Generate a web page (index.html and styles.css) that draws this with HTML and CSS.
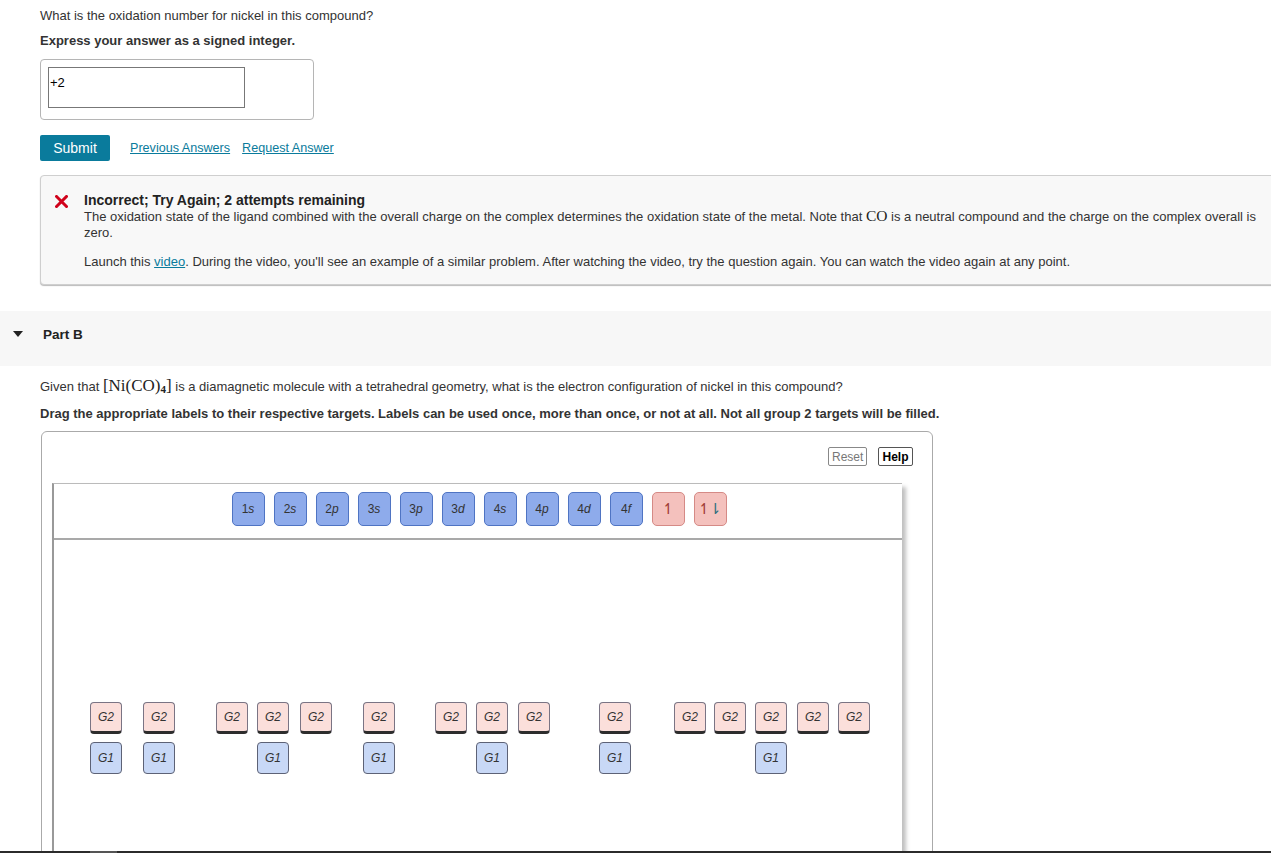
FILE: index.html
```html
<!DOCTYPE html>
<html>
<head>
<meta charset="utf-8">
<link rel="stylesheet" href="styles.css">
</head>
<body>
<div class="page">
  <section class="part-a">
    <p class="q">What is the oxidation number for nickel in this compound?</p>
    <p class="instr">Express your answer as a signed integer.</p>
    <div class="answer-box">
      <div class="answer-input">+2</div>
    </div>
    <div class="actions">
      <button class="submit">Submit</button>
      <a class="link" href="#">Previous Answers</a>
      <a class="link" href="#">Request Answer</a>
    </div>
    <div class="feedback">
      <svg class="xmark" width="13" height="13" viewBox="0 0 13 13"><path d="M1.5 1.5 L11.5 11.5 M11.5 1.5 L1.5 11.5" stroke="#d0021b" stroke-width="3" stroke-linecap="square"/></svg>
      <div class="fb-body">
        <div class="fb-title">Incorrect; Try Again; 2 attempts remaining</div>
        <p class="fb-text"><span class="nw">The oxidation state of the ligand combined with the overall charge on the complex determines the oxidation state of the metal. Note that <span class="math">CO</span> is a neutral compound and the charge on the complex overall is</span><br>zero.</p>
        <p class="fb-text fb-launch">Launch this <a class="vlink" href="#">video</a>. During the video, you'll see an example of a similar problem. After watching the video, try the question again. You can watch the video again at any point.</p>
      </div>
    </div>
  </section>

  <div class="part-header">
    <span class="tri"></span>
    <span class="part-title">Part B</span>
  </div>

  <section class="part-b">
    <p class="q2">Given that <span class="math big">[Ni(CO)<sub>4</sub>]</span> is a diamagnetic molecule with a tetrahedral geometry, what is the electron configuration of nickel in this compound?</p>
    <p class="instr2">Drag the appropriate labels to their respective targets. Labels can be used once, more than once, or not at all. Not all group 2 targets will be filled.</p>
    <div class="dnd">
      <div class="dnd-tools">
        <button class="tool reset">Reset</button>
        <button class="tool help">Help</button>
      </div>
      <div class="panel">
        <div class="bank">
          <div class="lbl">1<i>s</i></div>
          <div class="lbl">2<i>s</i></div>
          <div class="lbl">2<i>p</i></div>
          <div class="lbl">3<i>s</i></div>
          <div class="lbl">3<i>p</i></div>
          <div class="lbl">3<i>d</i></div>
          <div class="lbl">4<i>s</i></div>
          <div class="lbl">4<i>p</i></div>
          <div class="lbl">4<i>d</i></div>
          <div class="lbl">4<i>f</i></div>
          <div class="lbl spin"><span class="up">↿</span></div>
          <div class="lbl spin"><span class="up">↿</span><span class="dn">⇂</span></div>
        </div>
        <div class="canvas">
          <div class="tg g2" style="left:36px">G2</div>
          <div class="tg g2" style="left:89px">G2</div>
          <div class="tg g2" style="left:162px">G2</div>
          <div class="tg g2" style="left:203px">G2</div>
          <div class="tg g2" style="left:246px">G2</div>
          <div class="tg g2" style="left:309px">G2</div>
          <div class="tg g2" style="left:381px">G2</div>
          <div class="tg g2" style="left:422px">G2</div>
          <div class="tg g2" style="left:464px">G2</div>
          <div class="tg g2" style="left:545px">G2</div>
          <div class="tg g2" style="left:620px">G2</div>
          <div class="tg g2" style="left:660px">G2</div>
          <div class="tg g2" style="left:701px">G2</div>
          <div class="tg g2" style="left:743px">G2</div>
          <div class="tg g2" style="left:784px">G2</div>

          <div class="tg g1" style="left:36px">G1</div>
          <div class="tg g1" style="left:89px">G1</div>
          <div class="tg g1" style="left:203px">G1</div>
          <div class="tg g1" style="left:309px">G1</div>
          <div class="tg g1" style="left:422px">G1</div>
          <div class="tg g1" style="left:545px">G1</div>
          <div class="tg g1" style="left:701px">G1</div>
        </div>
      </div>
    </div>
  </section>
</div>
<div class="hscroll"><span class="thumb"></span></div>
</body>
</html>
```

FILE: styles.css
```css
html, body {
  margin: 0;
  padding: 0;
  background: #fff;
  overflow: hidden;
}
body {
  font-family: "Liberation Sans", Arial, sans-serif;
  font-size: 13px;
  color: #333;
  width: 1271px;
  height: 853px;
}
.page {
  width: 1271px;
}
.part-a {
  padding: 8px 0 0 40px;
}
.q {
  margin: 0;
  line-height: 16px;
}
.instr {
  margin: 9px 0 0 0;
  font-weight: bold;
  line-height: 16px;
}
.answer-box {
  margin-top: 10px;
  width: 258px;
  height: 45px;
  border: 1px solid #b5b5b5;
  border-radius: 4px;
  padding: 7px;
}
.answer-input {
  width: 194px;
  height: 39px;
  border: 1px solid #777;
  color: #000;
  font-size: 13px;
  padding: 0 0 0 1px;
  line-height: 30px;
  box-sizing: content-box;
}
.actions {
  display: flex;
  align-items: center;
  margin-top: 15px;
  height: 26px;
}
.submit {
  width: 70px;
  height: 26px;
  border: 0;
  border-radius: 2px;
  background: #0a7b9c;
  color: #fff;
  font-family: "Liberation Sans", Arial, sans-serif;
  font-size: 14px;
  padding: 0;
  margin-right: 20px;
}
.link {
  color: #0a7b9c;
  font-size: 12.6px;
  text-decoration: underline;
  margin-right: 12px;
}
.feedback {
  margin-top: 14px;
  width: 1250px;
  background: #f8f8f8;
  border: 1px solid #cfcfcf;
  border-radius: 4px;
  box-shadow: 0 1px 1px #bbb;
  display: flex;
  padding: 16px 0 14px 14px;
  box-sizing: border-box;
}
.xmark {
  flex: none;
  margin-top: 3px;
  margin-right: 16px;
}
.fb-body {
  width: 1180px;
}
.fb-title {
  font-weight: bold;
  font-size: 14px;
  color: #222;
  line-height: 17px;
}
.fb-text {
  margin: 0;
  font-size: 13px;
  line-height: 16px;
  color: #333;
}
.nw {
  white-space: nowrap;
}
.fb-launch {
  margin-top: 13px;
}
.math {
  font-family: "Liberation Serif", "Times New Roman", serif;
  font-size: 16px;
  color: #222;
  line-height: 0;
}
.fb-text .math {
  font-size: 15.5px;
}
.math.big {
  font-size: 17px;
}
.math sub {
  font-size: 11px;
  font-weight: bold;
  vertical-align: -2px;
  line-height: 0;
}
.vlink {
  color: #0a7b9c;
  text-decoration: underline;
}
.part-header {
  margin-top: 26px;
  height: 55px;
  padding-bottom: 9px;
  box-sizing: border-box;
  background: #f7f7f7;
  display: flex;
  align-items: center;
}
.tri {
  width: 0;
  height: 0;
  border-left: 5px solid transparent;
  border-right: 5px solid transparent;
  border-top: 6px solid #222;
  margin-left: 13px;
  margin-right: 20px;
}
.part-title {
  font-weight: bold;
  font-size: 13.5px;
  color: #222;
}
.part-b {
  padding: 11px 0 0 40px;
}
.q2 {
  margin: 0;
  line-height: 20px;
}
.instr2 {
  margin: 9px 0 0 0;
  font-weight: bold;
  line-height: 16px;
}
.dnd {
  margin-top: 9px;
  margin-left: 1px;
  width: 892px;
  height: 440px;
  border: 1px solid #aaa;
  border-radius: 6px;
  padding: 15px 0 0 10px;
  box-sizing: border-box;
}
.dnd-tools {
  display: flex;
  justify-content: flex-end;
  gap: 11px;
  padding-right: 19px;
  height: 20px;
}
.tool {
  height: 19px;
  padding: 0 3px;
  background: #fff;
  border: 1px solid #888;
  border-radius: 2px;
  font-family: "Liberation Sans", Arial, sans-serif;
  font-size: 12px;
  line-height: 16px;
}
.reset {
  color: #777;
  width: 39px;
}
.help {
  color: #000;
  border-color: #555;
  font-weight: bold;
  width: 35px;
}
.panel {
  margin-top: 16px;
  width: 850px;
  height: 400px;
  border-top: 1px solid #bbb;
  border-left: 2px solid #999;
  box-shadow: 4px 4px 4px rgba(0,0,0,0.25);
  box-sizing: border-box;
  background: #fff;
}
.bank {
  height: 56px;
  border-bottom: 2px solid #a9a9a9;
  display: flex;
  justify-content: center;
  gap: 9px;
  padding-top: 8px;
  box-sizing: border-box;
  padding-left: 2px;
}
.lbl {
  width: 31px;
  height: 32px;
  background: #8eabeb;
  border: 1px solid #4f74c3;
  border-radius: 5px;
  display: flex;
  align-items: center;
  justify-content: center;
  font-size: 12px;
  color: #333;
}
.lbl i {
  font-style: italic;
}
.lbl.spin {
  background: #f4c1bd;
  border-color: #d58a86;
  font-size: 15px;
}
.up {
  color: #9e3a33;
}
.dn {
  color: #2e6f7e;
  margin-left: -2px;
}
.canvas {
  position: relative;
  height: 330px;
}
.tg {
  position: absolute;
  width: 30px;
  display: flex;
  align-items: center;
  justify-content: center;
  font-size: 12px;
  font-style: italic;
  color: #333;
  border-radius: 4px;
}
.g2 {
  top: 162px;
  height: 28px;
  background: #fbdfdb;
  border: 1px solid #7a7484;
  border-bottom: 3px solid #2d2d2d;
}
.g1 {
  top: 202px;
  height: 30px;
  background: #c8d8f6;
  border: 1px solid #5d6276;
}
.hscroll {
  position: fixed;
  left: 0;
  bottom: 0;
  width: 1271px;
  height: 2px;
  background: #2b2b2b;
}
.thumb {
  position: absolute;
  left: 90px;
  top: 0;
  width: 27px;
  height: 2px;
  background: #555;
}
```
